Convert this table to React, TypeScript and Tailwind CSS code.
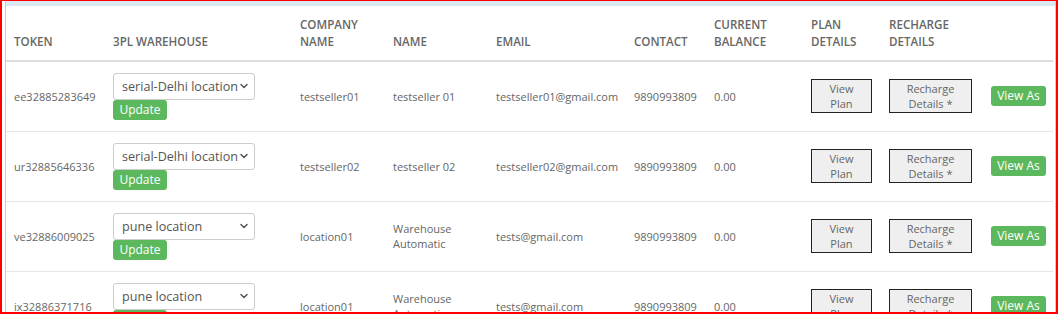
import { ChevronDown } from "lucide-react";

type Seller = {
  token: string;
  warehouse: string;
  company: string;
  name: string;
  email: string;
  contact: string;
  balance: string;
};

const sellers: Seller[] = [
  {
    token: "ee32885283649",
    warehouse: "serial-Delhi location",
    company: "testseller01",
    name: "testseller 01",
    email: "testseller01@gmail.com",
    contact: "9890993809",
    balance: "0.00",
  },
  {
    token: "ur32885646336",
    warehouse: "serial-Delhi location",
    company: "testseller02",
    name: "testseller 02",
    email: "testseller02@gmail.com",
    contact: "9890993809",
    balance: "0.00",
  },
  {
    token: "ve32886009025",
    warehouse: "pune location",
    company: "location01",
    name: "Warehouse Automatic",
    email: "tests@gmail.com",
    contact: "9890993809",
    balance: "0.00",
  },
  {
    token: "ix32886371716",
    warehouse: "pune location",
    company: "location01",
    name: "Warehouse Automatic",
    email: "tests@gmail.com",
    contact: "9890993809",
    balance: "0.00",
  },
];

const headers = [
  "TOKEN",
  "3PL WAREHOUSE",
  "COMPANY NAME",
  "NAME",
  "EMAIL",
  "CONTACT",
  "CURRENT BALANCE",
  "PLAN DETAILS",
  "RECHARGE DETAILS",
  "",
];

const widths = [99, 187, 93, 103, 138, 80, 97, 78, 102, 70];

function WarehouseSelect({ value }: { value: string }) {
  return (
    <div className="flex h-[27px] w-[142px] items-center justify-between rounded-[3px] border border-[#cccccc] bg-white pl-[8px] pr-[4px] text-[12.6px] text-[#555555]">
      <span className="whitespace-nowrap">{value}</span>
      <ChevronDown size={12} strokeWidth={3} className="shrink-0 text-[#555555]" />
    </div>
  );
}

function GreyButton({ lines, width }: { lines: string[]; width: string }) {
  return (
    <button
      className={`${width} flex h-[34px] flex-col items-center justify-center border border-[#222222] bg-[#efefef] text-[11px] leading-[15px] text-[#666666]`}
    >
      {lines.map((l) => (
        <span key={l} className="whitespace-nowrap">
          {l}
        </span>
      ))}
    </button>
  );
}

export default function App() {
  return (
    <div
      className="h-[314px] w-[1058px] overflow-hidden border-t border-r-2 border-b-2 border-l-2 border-[#ff0000] bg-white pl-[3px]"
      style={{ fontFamily: '"Open Sans", "Liberation Sans", sans-serif' }}
    >
      <div className="h-full w-[1051px] border-x border-[#cccccc]">
        <div className="h-[5px] bg-[#dce9f2]" />
        <table className="w-[1047px] table-fixed border-collapse text-[11px] leading-[15px] text-[#666666]">
          <colgroup>
            {widths.map((w, i) => (
              <col key={i} style={{ width: w }} />
            ))}
          </colgroup>
          <thead>
            <tr className="border-b-2 border-[#dddddd]">
              {headers.map((h, i) => (
                <th
                  key={i}
                  className="px-[8px] pt-[10px] pb-[10px] text-left align-bottom text-[11.6px] leading-[17px] font-semibold text-[#666666]"
                >
                  {h}
                </th>
              ))}
            </tr>
          </thead>
          <tbody>
            {sellers.map((s) => (
              <tr key={s.token} className="h-[70px] border-b border-[#e6e6e6]">
                <td className="px-[8px] align-middle">{s.token}</td>
                <td className="px-[8px] align-middle">
                  <div className="flex flex-col items-start">
                    <WarehouseSelect value={s.warehouse} />
                    <button className="h-[20px] w-[54px] rounded-[3px] bg-[#5cb85c] text-[12px] leading-[20px] text-white">
                      Update
                    </button>
                  </div>
                </td>
                <td className="px-[8px] align-middle">{s.company}</td>
                <td className="px-[8px] align-middle">{s.name}</td>
                <td className="px-[8px] align-middle">{s.email}</td>
                <td className="px-[8px] align-middle">{s.contact}</td>
                <td className="px-[8px] align-middle">{s.balance}</td>
                <td className="px-[8px] align-middle">
                  <GreyButton lines={["View", "Plan"]} width="w-[61px]" />
                </td>
                <td className="px-[8px] align-middle">
                  <GreyButton lines={["Recharge", "Details *"]} width="w-[83px]" />
                </td>
                <td className="px-[8px] align-middle">
                  <button className="h-[20px] w-[55px] rounded-[3px] bg-[#5cb85c] text-[12px] leading-[20px] whitespace-nowrap text-white">
                    View As
                  </button>
                </td>
              </tr>
            ))}
          </tbody>
        </table>
      </div>
    </div>
  );
}
